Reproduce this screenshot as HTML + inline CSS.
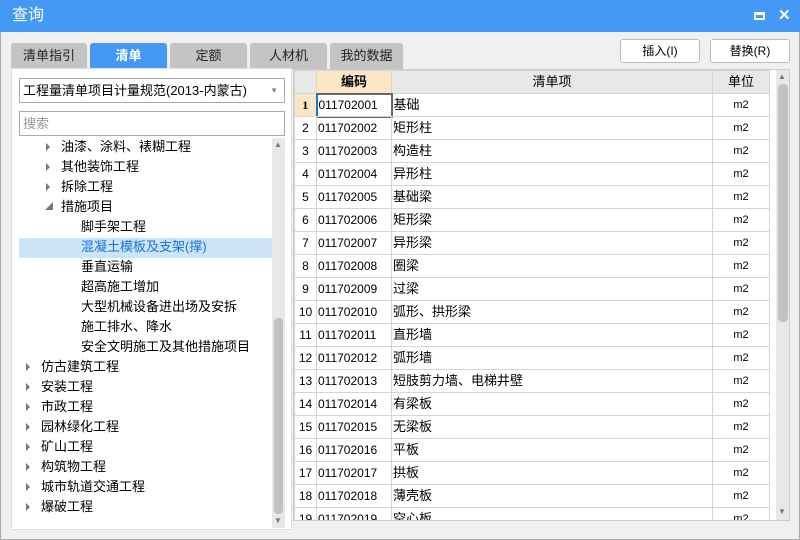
<!DOCTYPE html>
<html><head><meta charset="utf-8"><style>
*{margin:0;padding:0;box-sizing:border-box}
body{width:800px;height:540px;background:#f0f0f0;font-family:"Liberation Sans","Noto Sans CJK SC",sans-serif;font-size:12px;color:#000;position:relative;overflow:hidden;box-shadow:inset 0 0 0 1px #aaa}
.abs{position:absolute}
.title{left:0;top:0;width:800px;height:32px;background:#4499f5;color:#fff;font-size:16px;line-height:32px;padding-left:12px}
.tab{top:43px;height:26px;background:#c4c4c4;border-radius:3px 3px 0 0;text-align:center;line-height:26px;font-size:13px;color:#222}
.tab.on{background:#4499f5;color:#fff;font-weight:bold}
.btn{top:39px;width:80px;height:24px;border:1px solid #bbb;border-radius:3px;background:#fff;text-align:center;line-height:22px;font-size:12px}
.left{left:11px;top:68px;width:281px;height:462px;background:#fff;border:1px solid #ddd}
.combo{left:19px;top:78px;width:266px;height:25px;border:1px solid #aaa;background:#fff;line-height:23px;padding-left:3px;font-size:13px}
.search{left:19px;top:111px;width:266px;height:25px;border:1px solid #aaa;background:#fff;line-height:23px;padding-left:3px;font-size:13px;color:#999}
.tr{left:19px;width:253px;height:20px;line-height:20px;font-size:13px}
.tri{position:absolute;width:0;height:0;border-top:4px solid transparent;border-bottom:4px solid transparent;border-left:4px solid #777;top:6px}
.grid{left:293px;top:69px;width:497px;height:452px;background:#fff;border:1px solid #ccc;overflow:hidden}
table{border-collapse:collapse;position:absolute;left:0;top:0;table-layout:fixed}
td{border:1px solid #d4d4d4;height:23px;line-height:20px;font-size:12px;white-space:nowrap;overflow:hidden;padding:0 1px}
th{border:1px solid #d4d4d4;height:23px;line-height:20px;background:#e8e8e8;font-weight:normal;font-size:13px}
</style></head><body>
<div class="abs title">查询
<div class="abs" style="left:754px;top:12px;width:11px;height:8px;border:2px solid #fff;border-top-width:3px"></div>
<div class="abs" style="left:778px;top:0;font-size:15px;font-weight:bold">✕</div>
</div>
<div class="abs tab" style="left:11px;width:76px">清单指引</div>
<div class="abs tab on" style="left:90px;width:77px">清单</div>
<div class="abs tab" style="left:170px;width:77px">定额</div>
<div class="abs tab" style="left:250px;width:77px">人材机</div>
<div class="abs tab" style="left:330px;width:73px">我的数据</div>
<div class="abs btn" style="left:620px">插入(I)</div>
<div class="abs btn" style="left:710px">替换(R)</div>
<div class="abs left"></div>
<div class="abs combo">工程量清单项目计量规范(2013-内蒙古)<span style="position:absolute;right:6px;top:0;color:#888;font-size:8px">▼</span></div>
<div class="abs search">搜索</div>
<div class="abs" style="left:272px;top:138px;width:13px;height:390px;background:#e8e8e8"></div>
<div class="abs" style="left:274px;top:318px;width:9px;height:196px;background:#c2c2c2;border-radius:4px"></div>
<div class="abs" style="left:274px;top:140px;font-size:8px;color:#777">▲</div>
<div class="abs" style="left:274px;top:516px;font-size:8px;color:#777">▼</div>
<div class="abs" style="left:19px;top:238px;width:253px;height:20px;background:#cce4f7"></div>
<div class="abs tr" style="top:137px"><i class="tri" style="left:27px"></i><span style="position:absolute;left:42px">油漆、涂料、裱糊工程</span></div>
<div class="abs tr" style="top:157px"><i class="tri" style="left:27px"></i><span style="position:absolute;left:42px">其他装饰工程</span></div>
<div class="abs tr" style="top:177px"><i class="tri" style="left:27px"></i><span style="position:absolute;left:42px">拆除工程</span></div>
<div class="abs tr" style="top:197px"><span style="position:absolute;left:26px;top:0;font-size:8px;color:#777">◢</span><span style="position:absolute;left:42px">措施项目</span></div>
<div class="abs tr" style="top:217px"><span style="position:absolute;left:62px">脚手架工程</span></div>
<div class="abs tr" style="top:237px;color:#1a73d9"><span style="position:absolute;left:62px">混凝土模板及支架(撑)</span></div>
<div class="abs tr" style="top:257px"><span style="position:absolute;left:62px">垂直运输</span></div>
<div class="abs tr" style="top:277px"><span style="position:absolute;left:62px">超高施工增加</span></div>
<div class="abs tr" style="top:297px"><span style="position:absolute;left:62px">大型机械设备进出场及安拆</span></div>
<div class="abs tr" style="top:317px"><span style="position:absolute;left:62px">施工排水、降水</span></div>
<div class="abs tr" style="top:337px"><span style="position:absolute;left:62px">安全文明施工及其他措施项目</span></div>
<div class="abs tr" style="top:357px"><i class="tri" style="left:7px"></i><span style="position:absolute;left:22px">仿古建筑工程</span></div>
<div class="abs tr" style="top:377px"><i class="tri" style="left:7px"></i><span style="position:absolute;left:22px">安装工程</span></div>
<div class="abs tr" style="top:397px"><i class="tri" style="left:7px"></i><span style="position:absolute;left:22px">市政工程</span></div>
<div class="abs tr" style="top:417px"><i class="tri" style="left:7px"></i><span style="position:absolute;left:22px">园林绿化工程</span></div>
<div class="abs tr" style="top:437px"><i class="tri" style="left:7px"></i><span style="position:absolute;left:22px">矿山工程</span></div>
<div class="abs tr" style="top:457px"><i class="tri" style="left:7px"></i><span style="position:absolute;left:22px">构筑物工程</span></div>
<div class="abs tr" style="top:477px"><i class="tri" style="left:7px"></i><span style="position:absolute;left:22px">城市轨道交通工程</span></div>
<div class="abs tr" style="top:497px"><i class="tri" style="left:7px"></i><span style="position:absolute;left:22px">爆破工程</span></div>
<div class="abs grid">
<table style="width:475px">
<colgroup><col style="width:22px"><col style="width:75px"><col style="width:321px"><col style="width:57px"></colgroup>
<tr><th></th><th style="background:#fde6c8;font-weight:bold">编码</th><th>清单项</th><th>单位</th></tr>
<tr><td style="background:#fde6c8;text-align:center;font-weight:bold;font-family:'Liberation Serif',serif">1</td><td style="border:2px solid #666;border-left:2px solid #1a73d9">011702001</td><td style="font-size:13px">基础</td><td style="text-align:center;font-size:11px">m2</td></tr>
</table>
<div id="rows"></div>
<div class="abs" style="left:482px;top:0;width:14px;height:450px;background:#e8e8e8"></div>
<div class="abs" style="left:484px;top:14px;width:10px;height:238px;background:#c2c2c2;border-radius:4px"></div>
<div class="abs" style="left:484px;top:2px;font-size:8px;color:#777">▲</div>
<div class="abs" style="left:484px;top:437px;font-size:8px;color:#777">▼</div>
<div class="abs" style="left:0;top:450px;width:482px;height:6px;background:#c8c8c8"></div>
<div class="abs" style="left:223px;top:450px;width:49px;height:6px;background:#4499f5"></div>
</div>
<script>
var n=["矩形柱","构造柱","异形柱","基础梁","矩形梁","异形梁","圈梁","过梁","弧形、拱形梁","直形墙","弧形墙","短肢剪力墙、电梯井壁","有梁板","无梁板","平板","拱板","薄壳板","空心板"];
var h='<table style="width:475px;position:absolute;top:46px;left:0"><colgroup><col style="width:22px"><col style="width:75px"><col style="width:321px"><col style="width:57px"></colgroup>';
for(var i=0;i<n.length;i++){var k=i+2;h+='<tr><td style="text-align:center">'+k+'</td><td>0117020'+(k<10?'0'+k:k)+'</td><td style="font-size:13px">'+n[i]+'</td><td style="text-align:center;font-size:11px">m2</td></tr>';}
document.getElementById('rows').innerHTML=h+'</table>';
</script>
</body></html>
